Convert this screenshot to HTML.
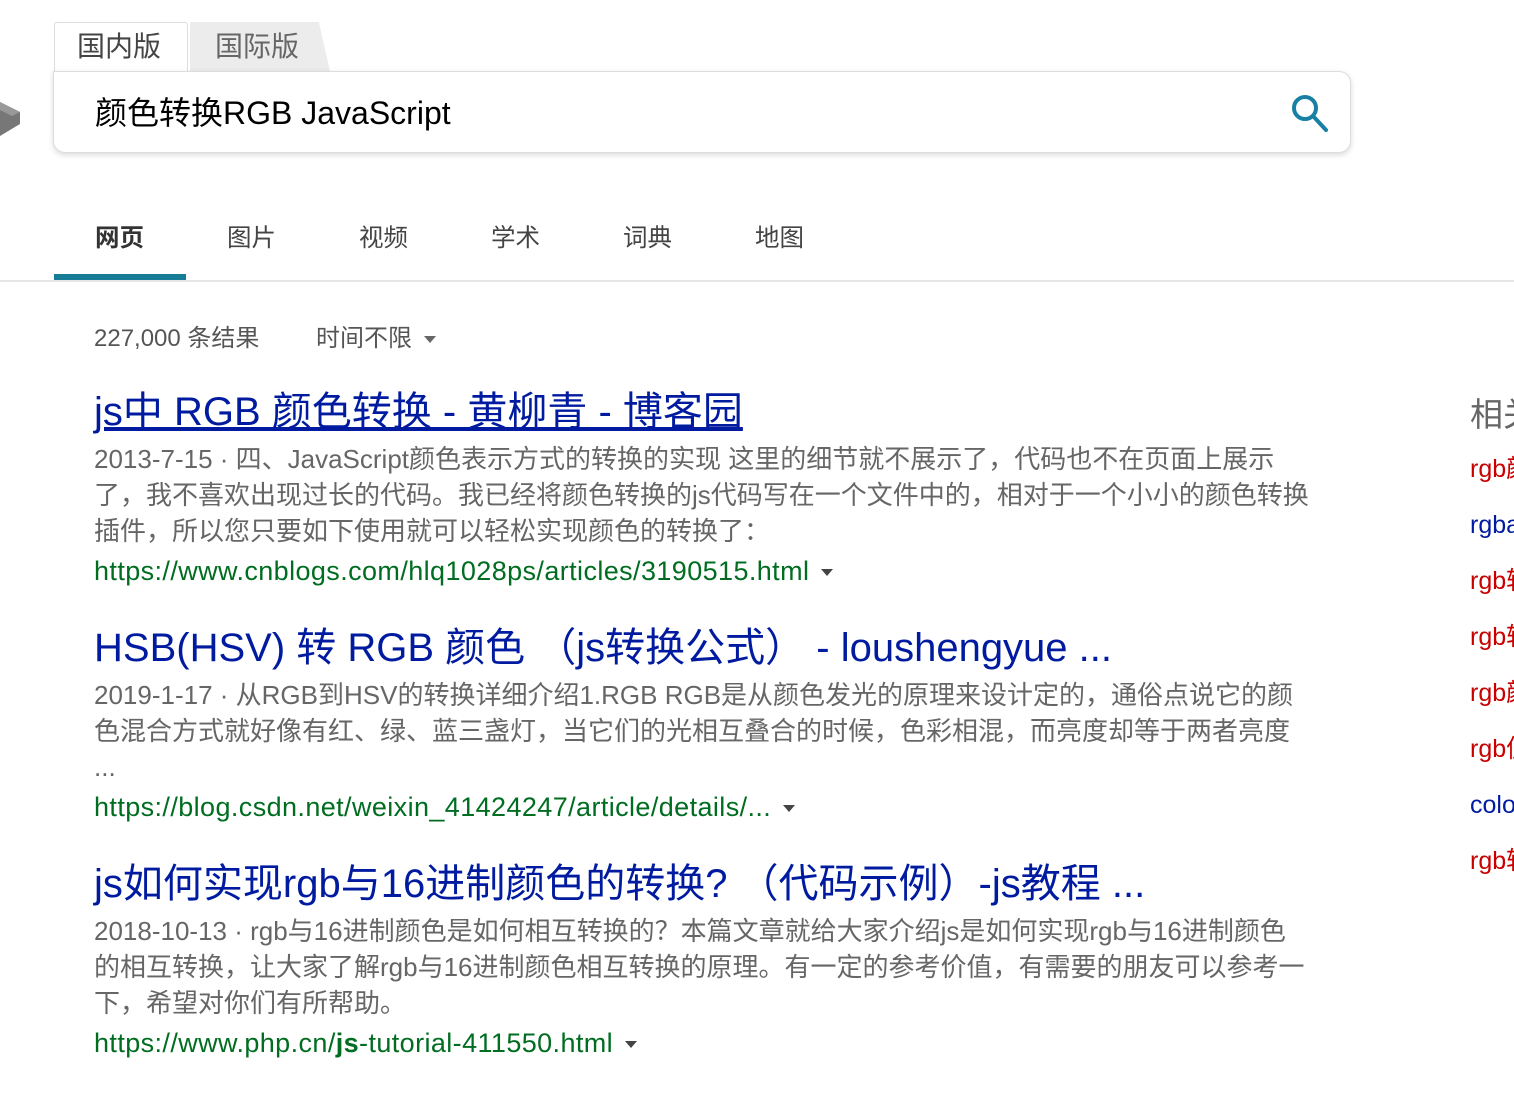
<!DOCTYPE html>
<html><head><meta charset="utf-8"><style>
*{margin:0;padding:0;box-sizing:border-box}
body{width:1514px;height:1098px;background:#fff;position:relative;overflow:hidden;font-family:"Liberation Sans","Noto Sans CJK SC",sans-serif}
.a{position:absolute;white-space:nowrap}
.t{color:#001ba0;font-size:40px;line-height:46px}
.s{color:#666;font-size:26px;line-height:36px}
.u{color:#006d21;font-size:27px;line-height:30px;letter-spacing:0.4px}
.tri{display:inline-block;width:0;height:0;border-left:6px solid transparent;border-right:6px solid transparent;border-top:7px solid #444;vertical-align:middle;margin-left:12px}
.r{font-size:25px;line-height:30px;left:1470px}
.red{color:#c80000}.blu{color:#001ba0}
.nav{font-size:24.5px;color:#444;top:219px}
</style></head><body>
<svg class="a" style="left:0;top:98px" width="22" height="42"><polygon points="0,4 20,14 20,26 0,38" fill="#777"/><polygon points="0,4 20,14 12,18 0,12" fill="#999"/></svg>
<div class="a" style="left:54px;top:22px;width:134px;height:50px;background:#fff;border:1px solid #ddd;border-bottom:none;border-radius:3px 3px 0 0"></div>
<div class="a" style="left:190px;top:22px;width:140px;height:49px;background:#ececec;clip-path:polygon(0 0,92% 0,100% 100%,0 100%)"></div>
<div class="a" style="left:77px;top:25px;font-size:28px;color:#444">国内版</div>
<div class="a" style="left:215px;top:25px;font-size:28px;color:#666">国际版</div>
<div class="a" style="left:53px;top:71px;width:1298px;height:82px;border:1px solid #ddd;border-radius:0 12px 12px 12px;box-shadow:0 2px 6px rgba(0,0,0,.15);background:#fff"></div>
<div class="a" style="left:95px;top:88px;font-size:32px;color:#000">颜色转换RGB JavaScript</div>
<svg class="a" style="left:1288px;top:90px" width="44" height="44"><circle cx="17" cy="18" r="11" fill="none" stroke="#1780a3" stroke-width="4"/><line x1="25" y1="26" x2="38" y2="40" stroke="#1780a3" stroke-width="4" stroke-linecap="round"/></svg>
<div class="a nav" style="left:95px;font-weight:bold;color:#333">网页</div>
<div class="a nav" style="left:227px">图片</div>
<div class="a nav" style="left:359px">视频</div>
<div class="a nav" style="left:491px">学术</div>
<div class="a nav" style="left:623px">词典</div>
<div class="a nav" style="left:755px">地图</div>
<div class="a" style="left:54px;top:274px;width:132px;height:6px;background:#177d96"></div>
<div class="a" style="left:0;top:280px;width:1514px;height:2px;background:#e5e5e5"></div>
<div class="a" style="left:94px;top:318px;font-size:24px;color:#555">227,000 条结果</div>
<div class="a" style="left:316px;top:318px;font-size:24px;color:#555">时间不限<span class="tri" style="border-top-color:#666"></span></div>

<div class="a t" style="left:94px;top:389px;text-decoration:underline">js中 RGB 颜色转换 - 黄柳青 - 博客园</div>
<div class="a s" style="left:94px;top:441px">2013-7-15 · 四、JavaScript颜色表示方式的转换的实现 这里的细节就不展示了，代码也不在页面上展示<br>了，我不喜欢出现过长的代码。我已经将颜色转换的js代码写在一个文件中的，相对于一个小小的颜色转换<br>插件，所以您只要如下使用就可以轻松实现颜色的转换了：</div>
<div class="a u" style="left:94px;top:556px">https://www.cnblogs.com/hlq1028ps/articles/3190515.html<span class="tri"></span></div>

<div class="a t" style="left:94px;top:625px">HSB(HSV) 转 RGB 颜色 （js转换公式） - loushengyue ...</div>
<div class="a s" style="left:94px;top:677px">2019-1-17 · 从RGB到HSV的转换详细介绍1.RGB RGB是从颜色发光的原理来设计定的，通俗点说它的颜<br>色混合方式就好像有红、绿、蓝三盏灯，当它们的光相互叠合的时候，色彩相混，而亮度却等于两者亮度<br>...</div>
<div class="a u" style="left:94px;top:792px">https://blog.csdn.net/weixin_41424247/article/details/...<span class="tri"></span></div>

<div class="a t" style="left:94px;top:861px">js如何实现rgb与16进制颜色的转换? （代码示例）-js教程 ...</div>
<div class="a s" style="left:94px;top:913px">2018-10-13 · rgb与16进制颜色是如何相互转换的？本篇文章就给大家介绍js是如何实现rgb与16进制颜色<br>的相互转换，让大家了解rgb与16进制颜色相互转换的原理。有一定的参考价值，有需要的朋友可以参考一<br>下，希望对你们有所帮助。</div>
<div class="a u" style="left:94px;top:1028px">https://www.php.cn/<b>js</b>-tutorial-411550.html<span class="tri"></span></div>

<div class="a" style="left:1470px;top:388px;font-size:33px;color:#666">相关</div>
<div class="a r red" style="top:454px">rgb颜色</div>
<div class="a r blu" style="top:510px">rgba</div>
<div class="a r red" style="top:566px">rgb转</div>
<div class="a r red" style="top:622px">rgb转</div>
<div class="a r red" style="top:678px">rgb颜</div>
<div class="a r red" style="top:734px">rgb值</div>
<div class="a r blu" style="top:790px">color</div>
<div class="a r red" style="top:846px">rgb转</div>
</body></html>
